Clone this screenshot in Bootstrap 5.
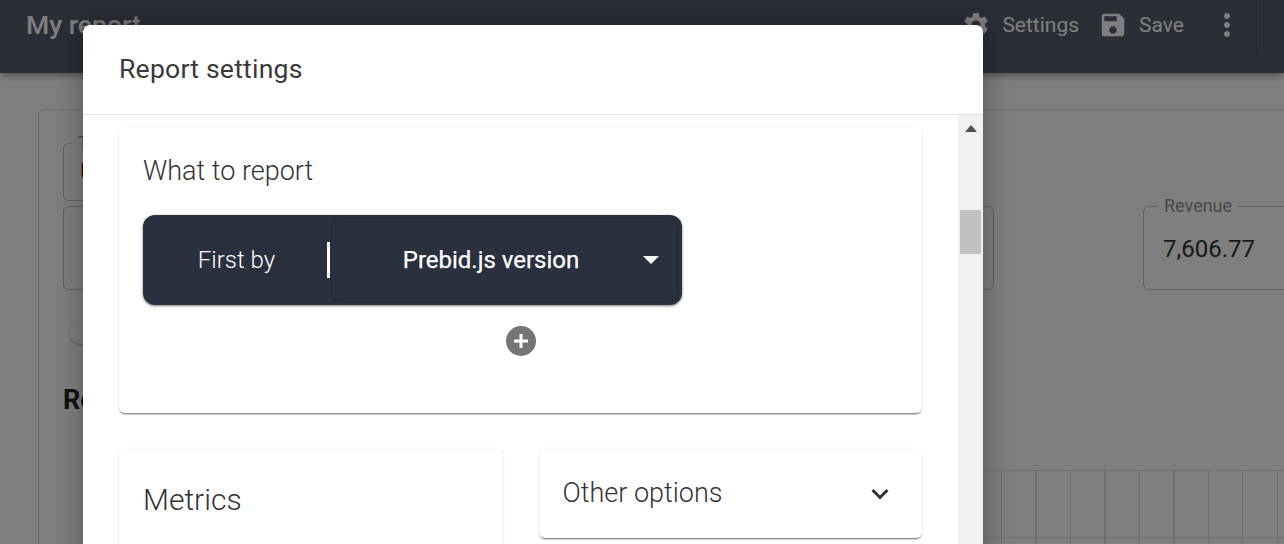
<!DOCTYPE html>
<html lang="en">
<head>
<meta charset="utf-8">
<title>Report settings</title>
<link href="https://cdn.jsdelivr.net/npm/bootstrap@5.3.0/dist/css/bootstrap.min.css" rel="stylesheet">
<style>
html,body{height:544px;overflow:hidden;font-family:Roboto,"Liberation Sans",sans-serif;background:#fff}
.page-root{width:1284px;height:544px;overflow:hidden;position:relative}
.top-bar{height:73px;background:#545c6e;color:#fff;box-shadow:0 2px 8px rgba(0,0,0,.4);padding:0 27px 0 26px;position:relative}
.bar-title{font-size:26.5px;font-weight:500;line-height:50px}
.bar-tools{height:50px;font-size:21px}
.bar-tools svg{fill:currentColor;display:block;flex:none}
.tool-text{padding-top:2px}
.gap-a{margin-left:11px}
.gap-b{margin-left:19px}
.gap-c{margin-left:11px}
.gap-d{margin-left:25px}
.bar-sep{width:1px;height:55px;background:rgba(0,0,0,.15);margin-left:11px;align-self:flex-start}
.under-panel{margin:36px 0 0 38px;width:1400px;height:500px;border:1px solid #dcdcdc;border-radius:6px;padding:25px 24px}
.out-field{border:1px solid #c4c4c4;border-radius:6px;margin:0;padding:0 19px;min-width:0;flex:none}
.out-field legend{float:none;width:auto;height:16px;font-size:18px;line-height:16px;padding:0 6px;margin:0 0 0 -5px;color:#909090}
.field-a{width:300px;height:66px;padding:0 16px}
.field-a legend{margin-left:-8px}
.field-a .field-val{color:#900000;margin-top:1px}
.row-two{margin-top:-3px}
.field-b{width:931px;height:92px}
.field-b legend{padding:0}
.field-c{width:300px;height:92px;margin-left:149px}
.field-val{font-size:24px;line-height:40px;color:#333;margin-top:15px}
.pill-under{width:200px;height:22px;border-radius:11px;background:#fff;box-shadow:0 1px 3px rgba(0,0,0,.3);margin:32px 0 0 7px}
.under-head{font-size:27px;font-weight:700;color:#222;margin:40px 0 0}
.grid-under{height:120px;margin:54px 0 0 100px;border-top:1px solid #e0e0e0;background-image:repeating-linear-gradient(90deg,transparent 0 10px,#e0e0e0 10px 11px,transparent 11px 34.5px),linear-gradient(#e0e0e0,#e0e0e0);background-size:auto,100% 1px;background-position:0 0,0 66px;background-repeat:no-repeat}
.shade{position:absolute;inset:0;background:rgba(0,0,0,.5)}
.sheet{position:absolute;left:83px;top:25px;width:900px;height:560px;margin:0;background:#fff;box-shadow:0 0 30px rgba(0,0,0,.35);border:0;border-radius:7px;overflow:hidden;display:flex;flex-direction:column}
.sheet-head{height:90px;padding:0 36px 2px;border-bottom:1px solid #dee2e6;border-radius:0;flex:none}
.sheet-title{font-size:26.6px;font-weight:400;color:#3a3a3a;line-height:1.2;letter-spacing:.2px}
.sheet-body{display:flex;flex:1;padding:0;min-height:0}
.sheet-scroll{flex:1;padding:12px 36px 0;min-width:0}
.bar-track{width:25px;background:#f1f1f1;flex:none;padding:0 2px}
.bar-arrow{width:0;height:0;border:6px solid transparent;border-top:0;border-bottom:7px solid #505050;margin:10px auto 0}
.bar-thumb{height:44px;background:#c1c1c1;margin-top:78px}
.paper{background:#fff;border:0;border-radius:6px;box-shadow:0 2px 2px -1px rgba(0,0,0,.6),0 0 3px rgba(0,0,0,.08)}
.paper-main{height:286px;padding:24px}
.paper-title{font-size:27px;font-weight:300;color:#333;line-height:40px;margin:0}
.pick-row{width:539px;height:90px;background:#2a303e;color:#fff;border-radius:12px;box-shadow:0 1px 3px rgba(0,0,0,.5);margin-top:24px;padding:3px 4px 3px 0}
.pick-label{width:184px;flex:none;text-align:center;font-size:24px;font-weight:300;padding-left:3px}
.pick-rule{width:3px;height:36px;background:#fff;flex:none}
.pick-box{flex:1;margin-left:1px;border:1px solid #222938;border-radius:8px;font-size:24px;font-weight:400}
.pick-text{width:311px;flex:none;text-align:center;padding-left:7px;-webkit-text-stroke:.25px #fff}
.pick-caret{width:0;height:0;border:8px solid transparent;border-bottom:0;border-top:8px solid #fff}
.plus-wrap{height:30px;margin-top:21px}
.two-up{margin-top:36px;gap:36px}
.paper-half{width:384px}
.metrics-card{height:200px;padding:31px 24px}
.metrics-card .paper-title{font-size:30px}
.options-card{height:89px;padding:0 32px 0 24px}
.options-title{font-size:27px;font-weight:300;color:#333}
</style>
</head>
<body>
<div class="page-root">
  <nav class="top-bar d-flex justify-content-between align-items-start">
    <div class="bar-title">My report</div>
    <div class="bar-tools d-flex align-items-center">
      <svg width="30" height="30" viewBox="0 0 24 24"><path d="M19.14 12.94c.04-.3.06-.61.06-.94 0-.32-.02-.64-.07-.94l2.03-1.58c.18-.14.23-.41.12-.61l-1.92-3.32c-.12-.22-.37-.29-.59-.22l-2.39.96c-.5-.38-1.03-.7-1.62-.94l-.36-2.54c-.04-.24-.24-.41-.48-.41h-3.84c-.24 0-.43.17-.47.41l-.36 2.54c-.59.24-1.13.57-1.62.94l-2.39-.96c-.22-.08-.47 0-.59.22L2.74 8.87c-.12.21-.08.47.12.61l2.03 1.58c-.05.3-.09.63-.09.94s.02.64.07.94l-2.03 1.58c-.18.14-.23.41-.12.61l1.92 3.32c.12.22.37.29.59.22l2.39-.96c.5.38 1.03.7 1.62.94l.36 2.54c.05.24.24.41.48.41h3.84c.24 0 .44-.17.47-.41l.36-2.54c.59-.24 1.13-.56 1.62-.94l2.39.96c.22.08.47 0 .59-.22l1.92-3.32c.12-.22.07-.47-.12-.61l-2.01-1.58zM12 15.6c-1.98 0-3.6-1.62-3.6-3.6s1.62-3.6 3.6-3.6 3.6 1.62 3.6 3.6-1.62 3.6-3.6 3.6z"/></svg>
      <span class="gap-a tool-text">Settings</span>
      <svg class="gap-b" width="30" height="30" viewBox="0 0 24 24"><path d="M17 3H5c-1.11 0-2 .9-2 2v14c0 1.1.89 2 2 2h14c1.1 0 2-.9 2-2V7l-4-4zm-5 16c-1.66 0-3-1.34-3-3s1.34-3 3-3 3 1.34 3 3-1.34 3-3 3zm3-10H5V5h10v4z"/></svg>
      <span class="gap-c tool-text">Save</span>
      <svg class="gap-d" width="36" height="36" viewBox="0 0 24 24"><path d="M12 8c1.1 0 2-.9 2-2s-.9-2-2-2-2 .9-2 2 .9 2 2 2zm0 2c-1.1 0-2 .9-2 2s.9 2 2 2 2-.9 2-2-.9-2-2-2zm0 6c-1.1 0-2 .9-2 2s.9 2 2 2 2-.9 2-2-.9-2-2-2z"/></svg>
      <div class="bar-sep"></div>
    </div>
  </nav>
  <main class="under-panel">
    <fieldset class="out-field field-a"><legend>Type</legend><div class="field-val">Unit</div></fieldset>
    <div class="d-flex row-two">
      <fieldset class="out-field field-b"><legend></legend></fieldset>
      <fieldset class="out-field field-c"><legend>Revenue</legend><div class="field-val">7,606.77</div></fieldset>
    </div>
    <div class="pill-under"></div>
    <h2 class="under-head">Report</h2>
    <div class="grid-under"></div>
  </main>
  <div class="shade"></div>
  <div class="modal-content sheet">
    <div class="modal-header sheet-head"><h5 class="modal-title sheet-title">Report settings</h5></div>
    <div class="modal-body sheet-body">
      <div class="sheet-scroll">
        <section class="paper paper-main">
          <h3 class="paper-title">What to report</h3>
          <div class="pick-row d-flex align-items-center">
            <div class="pick-label">First by</div>
            <div class="pick-rule"></div>
            <div class="pick-box d-flex align-items-center h-100">
              <div class="pick-text">Prebid.js version</div>
              <div class="pick-caret"></div>
            </div>
          </div>
          <div class="plus-wrap d-flex justify-content-center">
            <svg width="30" height="30" viewBox="0 0 30 30"><circle cx="15" cy="15" r="15" fill="#757575"/><path d="M15 8v14M8 15h14" stroke="#fff" stroke-width="3"/></svg>
          </div>
        </section>
        <div class="d-flex two-up">
          <section class="paper paper-half metrics-card"><h3 class="paper-title">Metrics</h3></section>
          <section class="paper paper-half options-card d-flex justify-content-between align-items-center">
            <span class="options-title">Other options</span>
            <svg width="20" height="14" viewBox="0 0 20 14"><path d="M2.500 3l7.500 7.500L17.500 3" fill="none" stroke="#333" stroke-width="3"/></svg>
          </section>
        </div>
      </div>
      <div class="bar-track"><div class="bar-arrow"></div><div class="bar-thumb"></div></div>
    </div>
  </div>
</div>
<script src="https://cdn.jsdelivr.net/npm/bootstrap@5.3.0/dist/js/bootstrap.bundle.min.js"></script>
</body>
</html>
